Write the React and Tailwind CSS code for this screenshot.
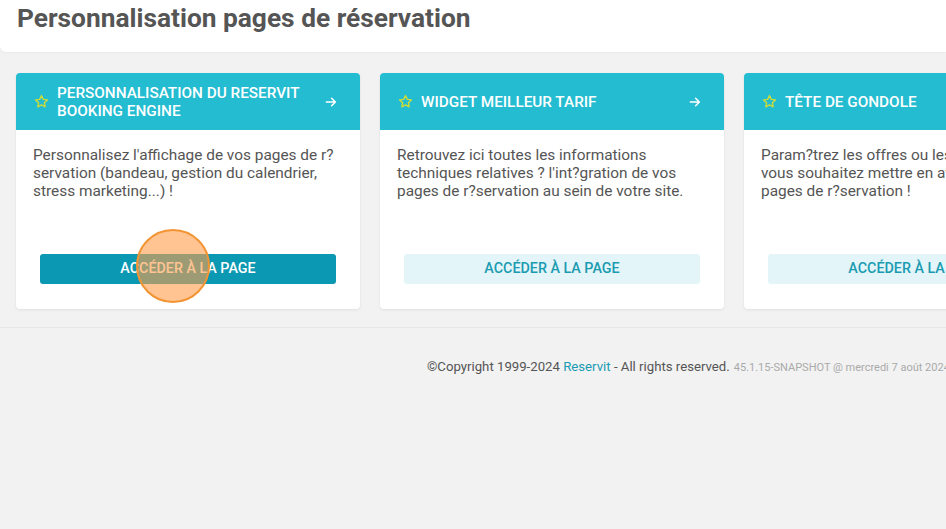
const cards = [
  {
    title: "PERSONNALISATION DU RESERVIT BOOKING ENGINE",
    text: "Personnalisez l'affichage de vos pages de r?servation (bandeau, gestion du calendrier, stress marketing...) !",
    primary: true,
  },
  {
    title: "WIDGET MEILLEUR TARIF",
    text: "Retrouvez ici toutes les informations techniques relatives ? l'int?gration de vos pages de r?servation au sein de votre site.",
  },
  {
    title: "TÊTE DE GONDOLE",
    text: "Param?trez les offres ou les chambres que vous souhaitez mettre en avant sur vos pages de r?servation !",
  },
];

function Star() {
  return (
    <svg width="15" height="15" viewBox="0 0 24 24" fill="none" stroke="#cddc39" strokeWidth="2.2" strokeLinejoin="round">
      <path d="M12 2.5l2.9 6.1 6.6.8-4.9 4.6 1.3 6.6L12 17.3l-5.9 3.3 1.3-6.6-4.9-4.6 6.6-.8z" />
    </svg>
  );
}

function Arrow() {
  return (
    <svg width="14" height="14" viewBox="0 0 24 24" fill="none" stroke="white" strokeWidth="2.6" strokeLinecap="round" strokeLinejoin="round">
      <path d="M4 12h15M13 5.5l6.5 6.5-6.5 6.5" />
    </svg>
  );
}

function Card({ card }) {
  return (
    <div className="relative w-[344px] h-[236px] shrink-0 bg-white rounded-[4px] shadow-[0_1px_3px_rgba(0,0,0,0.08)] flex flex-col">
      <div className="h-[57px] bg-[#23bcd1] rounded-t-[4px] flex items-center pl-[18px] pr-[22px]">
        <Star />
        <div className="ml-[8px] flex-1 text-white text-[15.3px] leading-[18px] font-medium">
          {card.title}
        </div>
        <Arrow />
      </div>
      <div className="flex-1 flex flex-col pt-4 px-[17px] pb-[25px]">
        <p className="text-[15.4px] leading-[18px] text-[#555]">{card.text}</p>
        <div className="mt-auto px-[7px]">
          <button
            className={
              card.primary
                ? "w-full h-[30px] rounded-[3px] bg-[#0b98b2] text-white text-[14.3px] font-medium"
                : "w-full h-[30px] rounded-[3px] bg-[#e3f5f8] text-[#1a9bb2] text-[14.3px] font-medium"
            }
          >
            ACCÉDER À LA PAGE
          </button>
        </div>
      </div>
      {card.primary && (
        <div className="absolute left-[120px] top-[156px] w-[74px] h-[74px] rounded-full border-2 border-[#f39433] bg-[#ff9d4a]/60" />
      )}
    </div>
  );
}

export default function App() {
  return (
    <div className="w-[946px] h-[529px] overflow-hidden bg-[#f2f2f2] font-['Roboto',sans-serif]">
      {/* Page title */}
      <div className="h-[52px] bg-white rounded-bl-[6px] shadow-[0_1px_2px_rgba(0,0,0,0.04)] pl-[17px] pt-[3px]">
        <h1 className="text-[26.3px] leading-[30px] font-bold text-[#555]">
          Personnalisation pages de réservation
        </h1>
      </div>

      {/* Cards */}
      <div className="flex gap-5 pl-4 pt-[21px]">
        {cards.map((card) => (
          <Card key={card.title} card={card} />
        ))}
      </div>

      {/* Footer */}
      <div className="mt-[18px] border-t border-[#e6e6e6] pt-[26px] pl-[427px] whitespace-nowrap">
        <span className="text-[13.2px] text-[#555]">
          ©Copyright 1999-2024 <span className="text-[#1a9bb2]">Reservit</span> - All rights reserved.
        </span>
        <span className="ml-1 text-[11px] text-[#aaa]">45.1.15-SNAPSHOT @ mercredi 7 août 2024 11:02</span>
      </div>
    </div>
  );
}
